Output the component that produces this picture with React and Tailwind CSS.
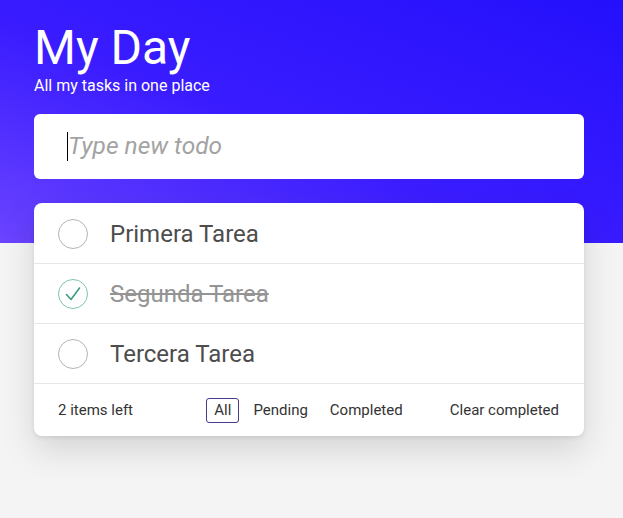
import React from "react";

const todos = [
  { id: 1, text: "Primera Tarea", done: false },
  { id: 2, text: "Segunda Tarea", done: true },
  { id: 3, text: "Tercera Tarea", done: false },
];

function Toggle({ done }) {
  if (done) {
    return (
      <svg width="30" height="30" viewBox="0 0 30 30" className="shrink-0">
        <circle cx="15" cy="15" r="14.5" fill="none" stroke="#7cc4ae" strokeWidth="1" />
        <path d="M8.5 15.5 L13 20.5 L21.5 9" fill="none" stroke="#3c9c82" strokeWidth="1.6" strokeLinecap="round" strokeLinejoin="round" />
      </svg>
    );
  }
  return (
    <svg width="30" height="30" viewBox="0 0 30 30" className="shrink-0">
      <circle cx="15" cy="15" r="14.5" fill="none" stroke="#b3b3b3" strokeWidth="1" />
    </svg>
  );
}

export default function App() {
  return (
    <div
      className="min-h-[518px] bg-[#f4f4f4] bg-[image:linear-gradient(to_top_right,#6b44ff_0%,#3a1cff_45%,#2410fc_100%)] bg-no-repeat bg-[length:100%_243px] pl-[34px] pt-6 pb-10"
      style={{ fontFamily: "Roboto, 'Liberation Sans', sans-serif" }}
    >
      <h1 className="text-[48px] leading-none text-white font-normal">My Day</h1>
      <p className="mt-[6px] text-[16px] leading-none text-white">All my tasks in one place</p>

      <div className="w-[550px] mt-5 h-[65px] rounded-[6px] bg-white flex items-center pl-[33px] pr-4">
        <span className="w-px h-[29px] bg-black shrink-0" />
        <input
          type="text"
          placeholder="Type new todo"
          className="w-full bg-transparent outline-none text-[24.5px] italic text-[#4d4d4d] placeholder:text-[#a3a3a3]"
        />
      </div>

      <div className="w-[550px] mt-6 rounded-[8px] bg-white shadow-[0_14px_34px_rgba(0,0,0,0.13),0_2px_4px_rgba(0,0,0,0.08)]">
        <ul className="pt-px">
          {todos.map((t) => (
            <li key={t.id} className="h-[60px] flex items-center pl-6 border-b border-[#e6e6e6]">
              <Toggle done={t.done} />
              <span
                className={
                  t.done
                    ? "ml-[22px] text-[24px] leading-none text-[#949494] line-through"
                    : "ml-[22px] text-[24px] leading-none text-[#4d4d4d]"
                }
              >
                {t.text}
              </span>
            </li>
          ))}
        </ul>
        <div className="h-[52px] grid grid-cols-[1fr_auto_1fr] items-center pl-6 pr-[25px] text-[15px] text-[#333]">
          <span>2 items left</span>
          <div className="flex items-center gap-[6px]">
            <button className="px-[7px] py-[3px] border border-[#4a3a8c] rounded-[3px] leading-[17px]">All</button>
            <button className="px-[7px] py-[3px] border border-transparent rounded-[3px] leading-[17px]">Pending</button>
            <button className="px-[7px] py-[3px] border border-transparent rounded-[3px] leading-[17px]">Completed</button>
          </div>
          <button className="justify-self-end">Clear completed</button>
        </div>
      </div>
    </div>
  );
}
